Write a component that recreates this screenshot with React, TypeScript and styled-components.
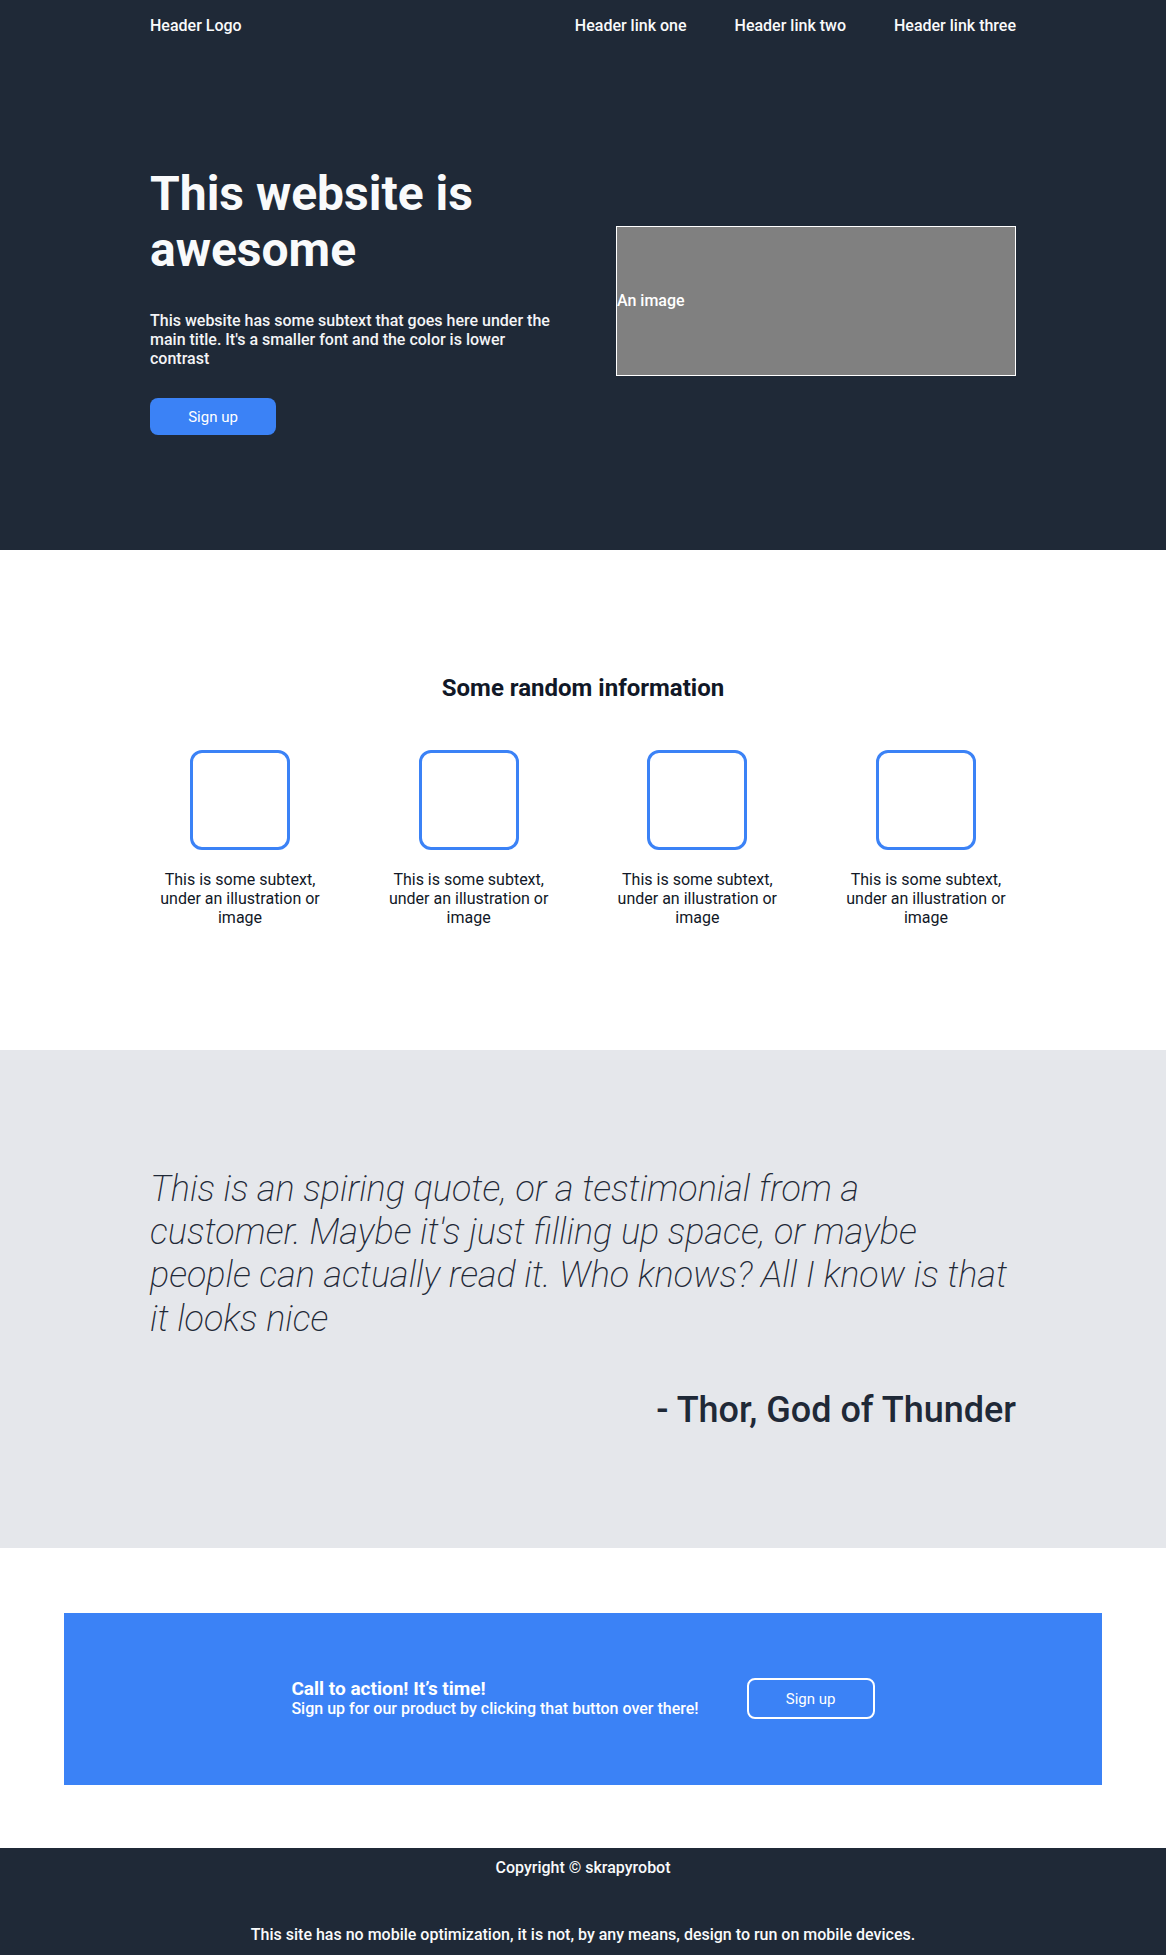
import React from 'react'
import styled, { createGlobalStyle } from 'styled-components'

const GlobalStyle = createGlobalStyle`
    * {
        box-sizing: border-box;
    }
    body {
        margin: 0;
        font-family: Roboto, "Liberation Sans", Arial, sans-serif;
        color: #111827;
        background: #ffffff;
    }
`;

const Hero = styled.section`
    background-color: #1f2937;
    color: #f9fafb;
`;

const Header = styled.header`
    display: flex;
    align-items: center;
    justify-content: space-between;
    padding: 16px 150px 14px;
    font-size: 16px;
    line-height: 20px;
    font-weight: 500;
`;

const Nav = styled.nav`
    display: flex;
    gap: 48px;
`;

const NavLink = styled.a`
    color: #f9fafb;
    text-decoration: none;
`;

const HeroBody = styled.div`
    display: flex;
    align-items: center;
    justify-content: space-between;
    padding: 116px 150px 115px;
`;

const HeroText = styled.div`
    width: 410px;
`;

const Title = styled.h1`
    margin: 0;
    font-size: 48px;
    line-height: 56px;
    font-weight: 700;
    color: #f9fafb;
`;

const Subtitle = styled.p`
    margin: 33px 0 0;
    font-size: 16px;
    line-height: 19px;
    font-weight: 500;
    color: #f3f4f6;
`;

const PrimaryButton = styled.button`
    margin-top: 30px;
    width: 126px;
    height: 37px;
    border: none;
    border-radius: 8px;
    background-color: #3b82f6;
    color: #ffffff;
    font-family: inherit;
    font-size: 15px;
`;

const ImageBox = styled.div`
    width: 400px;
    height: 150px;
    border: 1px solid #ffffff;
    background-color: #808080;
    display: flex;
    align-items: center;
    font-size: 16px;
    font-weight: 500;
    color: #ffffff;
`;

const InfoSection = styled.section`
    padding: 124px 150px 123px;
`;

const SectionTitle = styled.h2`
    margin: 0;
    text-align: center;
    font-size: 24px;
    line-height: 28px;
    font-weight: 700;
    color: #111827;
`;

const Cards = styled.div`
    display: flex;
    justify-content: space-between;
    margin-top: 48px;
`;

const Card = styled.div`
    width: 180px;
    display: flex;
    flex-direction: column;
    align-items: center;
`;

const Illustration = styled.div`
    width: 100px;
    height: 100px;
    border: 3px solid #3b82f6;
    border-radius: 12px;
`;

const CardText = styled.p`
    margin: 20px 0 0;
    text-align: center;
    font-size: 16px;
    line-height: 19px;
    color: #111827;
`;

const QuoteSection = styled.section`
    background-color: #e5e7eb;
    padding: 118px 150px 117px;
    color: #1f2937;
`;

const Quote = styled.blockquote`
    margin: 0;
    font-size: 36px;
    line-height: 1.2;
    font-style: italic;
    font-weight: 200;
`;

const Author = styled.p`
    margin: 48px 0 0;
    text-align: right;
    font-size: 36px;
    line-height: 42px;
    font-weight: 500;
`;

const CtaSection = styled.section`
    padding: 65px 64px 63px;
`;

const CtaBox = styled.div`
    background-color: #3b82f6;
    height: 172px;
    display: flex;
    align-items: center;
    justify-content: center;
    gap: 48px;
    color: #ffffff;
`;

const CtaText = styled.div`
    display: flex;
    flex-direction: column;
`;

const CtaTitle = styled.span`
    font-size: 19px;
    line-height: 21px;
    font-weight: 700;
`;

const CtaSub = styled.span`
    font-size: 16px;
    line-height: 20px;
    font-weight: 500;
`;

const OutlineButton = styled.button`
    width: 128px;
    height: 41px;
    border: 2px solid #ffffff;
    border-radius: 8px;
    background: transparent;
    color: #ffffff;
    font-family: inherit;
    font-size: 15px;
`;

const Footer = styled.footer`
    background-color: #1f2937;
    color: #f9fafb;
    padding: 10px 0;
    display: flex;
    flex-direction: column;
    align-items: center;
    gap: 47px;
    font-size: 16px;
    line-height: 20px;
    font-weight: 500;
`;

const features = [1, 2, 3, 4]

export default function App() {
    return (
        <>
            <GlobalStyle />
            <Hero>
                <Header>
                    <span>Header Logo</span>
                    <Nav>
                        <NavLink href="#">Header link one</NavLink>
                        <NavLink href="#">Header link two</NavLink>
                        <NavLink href="#">Header link three</NavLink>
                    </Nav>
                </Header>
                <HeroBody>
                    <HeroText>
                        <Title>This website is awesome</Title>
                        <Subtitle>
                            This website has some subtext that goes here under the main title. It's a smaller font and the color is lower contrast
                        </Subtitle>
                        <PrimaryButton>Sign up</PrimaryButton>
                    </HeroText>
                    <ImageBox>An image</ImageBox>
                </HeroBody>
            </Hero>

            <InfoSection>
                <SectionTitle>Some random information</SectionTitle>
                <Cards>
                    {features.map((n) => (
                        <Card key={n}>
                            <Illustration />
                            <CardText>This is some subtext, under an illustration or image</CardText>
                        </Card>
                    ))}
                </Cards>
            </InfoSection>

            <QuoteSection>
                <Quote>
                    This is an spiring quote, or a testimonial from a customer. Maybe it's just filling up space, or maybe people can actually read it. Who knows? All I know is that it looks nice
                </Quote>
                <Author>- Thor, God of Thunder</Author>
            </QuoteSection>

            <CtaSection>
                <CtaBox>
                    <CtaText>
                        <CtaTitle>Call to action! It’s time!</CtaTitle>
                        <CtaSub>Sign up for our product by clicking that button over there!</CtaSub>
                    </CtaText>
                    <OutlineButton>Sign up</OutlineButton>
                </CtaBox>
            </CtaSection>

            <Footer>
                <span>Copyright © skrapyrobot</span>
                <span>This site has no mobile optimization, it is not, by any means, design to run on mobile devices.</span>
            </Footer>
        </>
    )
}
